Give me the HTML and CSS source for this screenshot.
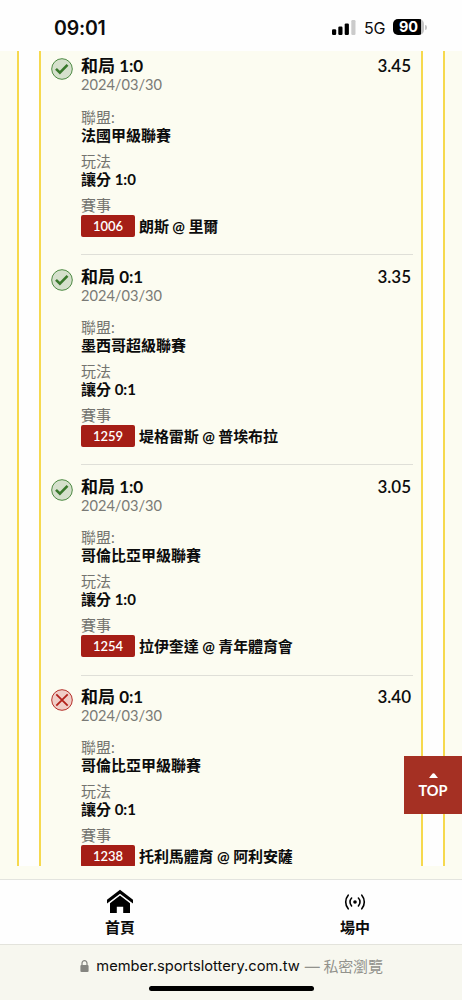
FILE: index.html
```
<!DOCTYPE html>
<html lang="zh-Hant">
<head>
  <meta charset="UTF-8" />
  <meta name="viewport" content="width=device-width, initial-scale=1.0"/>
  <title>台灣運彩 - 投注紀錄</title>
  <link rel="stylesheet" href="styles.css">
</head>
<body>

<svg class="sprite" width="0" height="0">
  <symbol id="icon-win" viewBox="0 0 22 22">
    <circle cx="11" cy="11" r="10.3" fill="#d5e0cc" stroke="#4d8a43" stroke-width="1"/>
    <path d="M5 10.8l3.9 3.9 7.6-7.8" fill="none" stroke="#39782c" stroke-width="2.6"/>
  </symbol>
  <symbol id="icon-lose" viewBox="0 0 22 22">
    <circle cx="11" cy="11" r="10.3" fill="#f0cdc7" stroke="#b5302a" stroke-width="1"/>
    <path d="M5.3 5.3l11.4 11.4M16.7 5.3L5.3 16.7" fill="none" stroke="#b3211b" stroke-width="1.8"/>
  </symbol>
</svg>

<div class="status-bar">
  <div class="time">09:01</div>
  <div class="status-right">
    <svg class="signal" width="24" height="15" viewBox="0 0 24 15">
      <rect x="0" y="9.3" width="4.2" height="5.7" rx="1.2"/>
      <rect x="6.3" y="6.5" width="4.2" height="8.5" rx="1.2"/>
      <rect x="12.7" y="3.4" width="4.2" height="11.6" rx="1.2"/>
      <rect x="19.3" y="0" width="4.2" height="15" rx="1.2" fill="#cbcbcb"/>
    </svg>
    <span class="network">5G</span>
    <span class="battery"><span class="level">90</span></span>
    <span class="battery-tip"></span>
  </div>
</div>

<div class="page">
  <div class="ticket">
    <div class="bets">

      <div class="bet">
        <svg class="result"><use href="#icon-win"/></svg>
        <div class="detail">
          <div class="title"><span>和局 1:0</span><span class="odds">3.45</span></div>
          <div class="date">2024/03/30</div>
          <div class="field"><div class="label">聯盟:</div><div class="value">法國甲級聯賽</div></div>
          <div class="field"><div class="label">玩法</div><div class="value">讓分 1:0</div></div>
          <div class="field"><div class="label">賽事</div><div class="match"><span class="code">1006</span><span>朗斯 @ 里爾</span></div></div>
        </div>
      </div>

      <div class="bet">
        <svg class="result"><use href="#icon-win"/></svg>
        <div class="detail">
          <div class="title"><span>和局 0:1</span><span class="odds">3.35</span></div>
          <div class="date">2024/03/30</div>
          <div class="field"><div class="label">聯盟:</div><div class="value">墨西哥超級聯賽</div></div>
          <div class="field"><div class="label">玩法</div><div class="value">讓分 0:1</div></div>
          <div class="field"><div class="label">賽事</div><div class="match"><span class="code">1259</span><span>堤格雷斯 @ 普埃布拉</span></div></div>
        </div>
      </div>

      <div class="bet">
        <svg class="result"><use href="#icon-win"/></svg>
        <div class="detail">
          <div class="title"><span>和局 1:0</span><span class="odds">3.05</span></div>
          <div class="date">2024/03/30</div>
          <div class="field"><div class="label">聯盟:</div><div class="value">哥倫比亞甲級聯賽</div></div>
          <div class="field"><div class="label">玩法</div><div class="value">讓分 1:0</div></div>
          <div class="field"><div class="label">賽事</div><div class="match"><span class="code">1254</span><span>拉伊奎達 @ 青年體育會</span></div></div>
        </div>
      </div>

      <div class="bet">
        <svg class="result"><use href="#icon-lose"/></svg>
        <div class="detail">
          <div class="title"><span>和局 0:1</span><span class="odds">3.40</span></div>
          <div class="date">2024/03/30</div>
          <div class="field"><div class="label">聯盟:</div><div class="value">哥倫比亞甲級聯賽</div></div>
          <div class="field"><div class="label">玩法</div><div class="value">讓分 0:1</div></div>
          <div class="field"><div class="label">賽事</div><div class="match"><span class="code">1238</span><span>托利馬體育 @ 阿利安薩</span></div></div>
        </div>
      </div>

    </div>
  </div>
</div>

<a href="#" class="btn-top">
  <svg width="9" height="5" viewBox="0 0 9 5"><path d="M0 5L3.6.6q.9-.9 1.8 0L9 5z" fill="#fff"/></svg>
  <span>TOP</span>
</a>

<div class="tab-bar">
  <a href="#" class="tab">
    <svg width="28" height="26" viewBox="0 0 28 26">
      <path d="M14 .8L1 10.8v3.8L14 4.8l13 9.8v-3.8z"/>
      <path d="M14 6.6L4 14.2V24h6.8v-6.2h6.4V24H24v-9.8z"/>
    </svg>
    <span>首頁</span>
  </a>
  <a href="#" class="tab live">
    <svg width="22" height="18" viewBox="0 0 22 18" fill="none" stroke="#000" stroke-width="1.6" stroke-linecap="round">
      <circle cx="11" cy="9" r="1.8" fill="#000" stroke="none"/>
      <path d="M7.6 5a5.8 5.8 0 0 0 0 8M14.4 5a5.8 5.8 0 0 1 0 8M4.2 2.2a10.5 10.5 0 0 0 0 13.6M17.8 2.2a10.5 10.5 0 0 1 0 13.6"/>
    </svg>
    <span>場中</span>
  </a>
</div>

<div class="address-bar">
  <div class="address">
    <svg width="9" height="12" viewBox="0 0 9 12">
      <path d="M2 6V3.2a2.5 2.5 0 0 1 5 0V6" fill="none" stroke="#858580" stroke-width="1.2"/>
      <rect x=".4" y="5" width="8.2" height="7" rx="1.1" fill="#858580"/>
    </svg>
    <span class="host">member.sportslottery.com.tw</span>
    <span class="private">— 私密瀏覽</span>
  </div>
  <div class="home-indicator"></div>
</div>

</body>
</html>
```
FILE: styles.css
```
* {
  box-sizing: border-box;
}

body {
  margin: 0;
  height: 1000px;
  display: flex;
  flex-direction: column;
  overflow: hidden;
  background: #fcfcf1;
  color: #0c0c0c;
  font-family: Lato, "Noto Sans CJK TC", sans-serif;
}

a {
  color: inherit;
  text-decoration: none;
}

.sprite {
  position: absolute;
}

/* status bar */
.status-bar {
  height: 51px;
  flex: none;
  display: flex;
  justify-content: space-between;
  padding: 15px 35px 0 54px;
  background: #fefefe;
  font-family: Inter, sans-serif;
}

.time {
  font-size: 19.5px;
  font-weight: 600;
  line-height: 26px;
  letter-spacing: -0.2px;
}

.status-right {
  display: flex;
  align-items: center;
  height: 24px;
}

.network {
  width: 21px;
  margin: 2px 8px 0 8px;
  font-size: 16px;
  letter-spacing: -0.2px;
}

.battery {
  width: 31px;
  height: 16px;
  border-radius: 5px;
  background: linear-gradient(90deg, #000 28px, #c4c4c4 28px);
  color: #fff;
  text-align: center;
}

.level {
  display: block;
  font-size: 14.5px;
  font-weight: 700;
  line-height: 16px;
}

.battery-tip {
  width: 2px;
  height: 5px;
  margin-left: 1px;
  border-radius: 0 2px 2px 0;
  background: #c4c4c4;
}

/* bet list */
.page {
  height: 815px;
  flex: none;
  overflow: hidden;
  padding: 0 17px;
}

.ticket {
  height: 815px;
  padding: 0 20px;
  border: solid #f6d94e;
  border-width: 0 2px;
  background: #fefefe;
}

.bets {
  height: 815px;
  overflow: hidden;
  padding: 0 8px 0 10px;
  border: solid #f6d94e;
  border-width: 0 2px;
  background: #fcfcf1;
}

.bet {
  display: flex;
  height: 210.3px;
}

.bet:first-child {
  margin-top: -6.3px;
}

.result {
  flex: none;
  width: 22px;
  height: 22px;
  margin: 13.5px 8.3px 0 -0.3px;
}

.detail {
  flex: 1;
  padding-top: 11.6px;
  border-bottom: 1px solid #dfdfd8;
}

.title {
  display: flex;
  justify-content: space-between;
  padding-right: 2px;
  font-size: 17px;
  font-weight: 700;
  line-height: 20px;
}

.odds {
  font-weight: 600;
}

.date {
  margin-bottom: 14.3px;
  color: #7a7a76;
  font-size: 14.6px;
  line-height: 17px;
}

.field {
  margin-bottom: 8px;
  font-size: 15px;
  line-height: 18px;
}

.label {
  color: #74746f;
}

.value,
.match {
  font-weight: 700;
}

.match {
  display: flex;
  align-items: center;
  gap: 4px;
  margin-top: 1px;
  height: 22px;
  letter-spacing: -0.1px;
}

.code {
  width: 54px;
  height: 22px;
  border-radius: 2px;
  background: #a51e16;
  color: #fff;
  font-size: 13px;
  font-weight: 600;
  line-height: 22px;
  letter-spacing: 0;
  text-align: center;
}

.btn-top {
  position: fixed;
  top: 756px;
  right: 0;
  width: 58px;
  height: 58px;
  display: flex;
  flex-direction: column;
  align-items: center;
  padding-top: 17px;
  background: #a53023;
  color: #fff;
  font-size: 14.5px;
  font-weight: 700;
  line-height: 26px;
}

/* bottom navigation */
.tab-bar {
  height: 65px;
  flex: none;
  display: flex;
  margin-top: 13px;
  padding-left: 2.5px;
  border-top: 1px solid #e3e4df;
  background: #fefefe;
}

.tab {
  flex: none;
  width: 235px;
  display: flex;
  flex-direction: column;
  align-items: center;
  padding-top: 9px;
  font-size: 15px;
  font-weight: 600;
  line-height: 24px;
}

.live svg {
  margin: 4px 0;
}

/* browser address bar */
.address-bar {
  height: 56px;
  flex: none;
  border-top: 1px solid #e3e3dc;
  background: #f7f7ef;
  font-family: Inter, "Noto Sans CJK TC", sans-serif;
}

.address {
  display: flex;
  justify-content: center;
  align-items: center;
  height: 41px;
  padding-left: 1px;
  font-size: 15px;
}

.host {
  margin: 0 5px 0 7px;
  font-size: 14.7px;
}

.private {
  color: #92928c;
  letter-spacing: -0.2px;
}

.home-indicator {
  width: 165px;
  height: 5px;
  margin: 0 auto;
  border-radius: 3px;
  background: #000;
}
```
